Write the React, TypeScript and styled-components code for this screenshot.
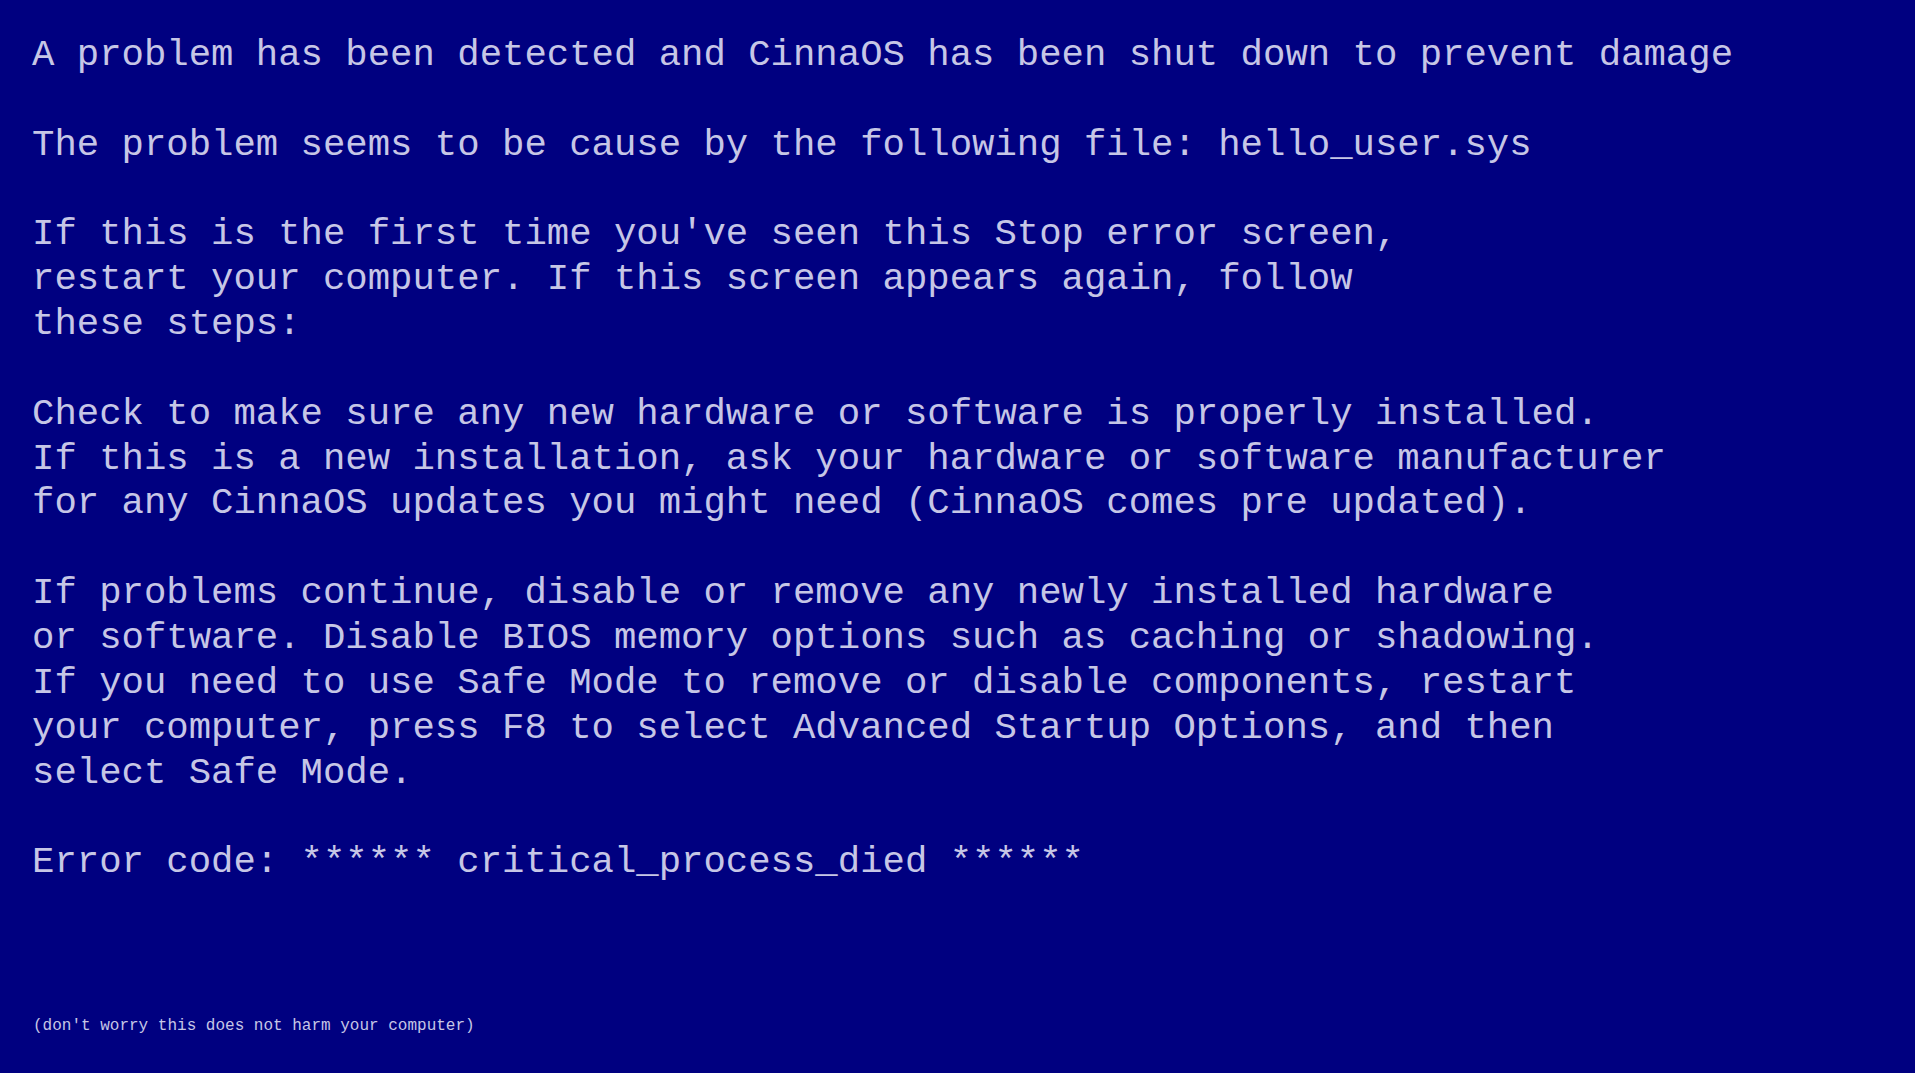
import React from "react";
import styled, { createGlobalStyle } from "styled-components";

const Global = createGlobalStyle`
  html, body {
    margin: 0;
    padding: 0;
    background: #000080;
  }
  body {
    font-family: "Liberation Mono", "Courier New", monospace;
  }
`;

const Screen = styled.main`
  min-height: 100vh;
  box-sizing: border-box;
  background: #000080;
  color: #c6c6e6;
  padding: 33px 28px 0 32px;
  display: flex;
  flex-direction: column;
`;

const Message = styled.pre`
  margin: 0;
  font-family: "Liberation Mono", "Courier New", monospace;
  font-size: 37.3px;
  line-height: 44.85px;
  white-space: pre;
`;

const Footnote = styled.p`
  margin: 132px 0 0 1px;
  font-family: "Liberation Mono", "Courier New", monospace;
  font-size: 16px;
  line-height: 18px;
  white-space: pre;
`;

const text = `A problem has been detected and CinnaOS has been shut down to prevent damage

The problem seems to be cause by the following file: hello_user.sys

If this is the first time you've seen this Stop error screen,
restart your computer. If this screen appears again, follow
these steps:

Check to make sure any new hardware or software is properly installed.
If this is a new installation, ask your hardware or software manufacturer
for any CinnaOS updates you might need (CinnaOS comes pre updated).

If problems continue, disable or remove any newly installed hardware
or software. Disable BIOS memory options such as caching or shadowing.
If you need to use Safe Mode to remove or disable components, restart
your computer, press F8 to select Advanced Startup Options, and then
select Safe Mode.

Error code: ****** critical_process_died ******`;

export default function App() {
  return (
    <>
      <Global />
      <Screen>
        <Message>{text}</Message>
        <Footnote>(don't worry this does not harm your computer)</Footnote>
      </Screen>
    </>
  );
}
